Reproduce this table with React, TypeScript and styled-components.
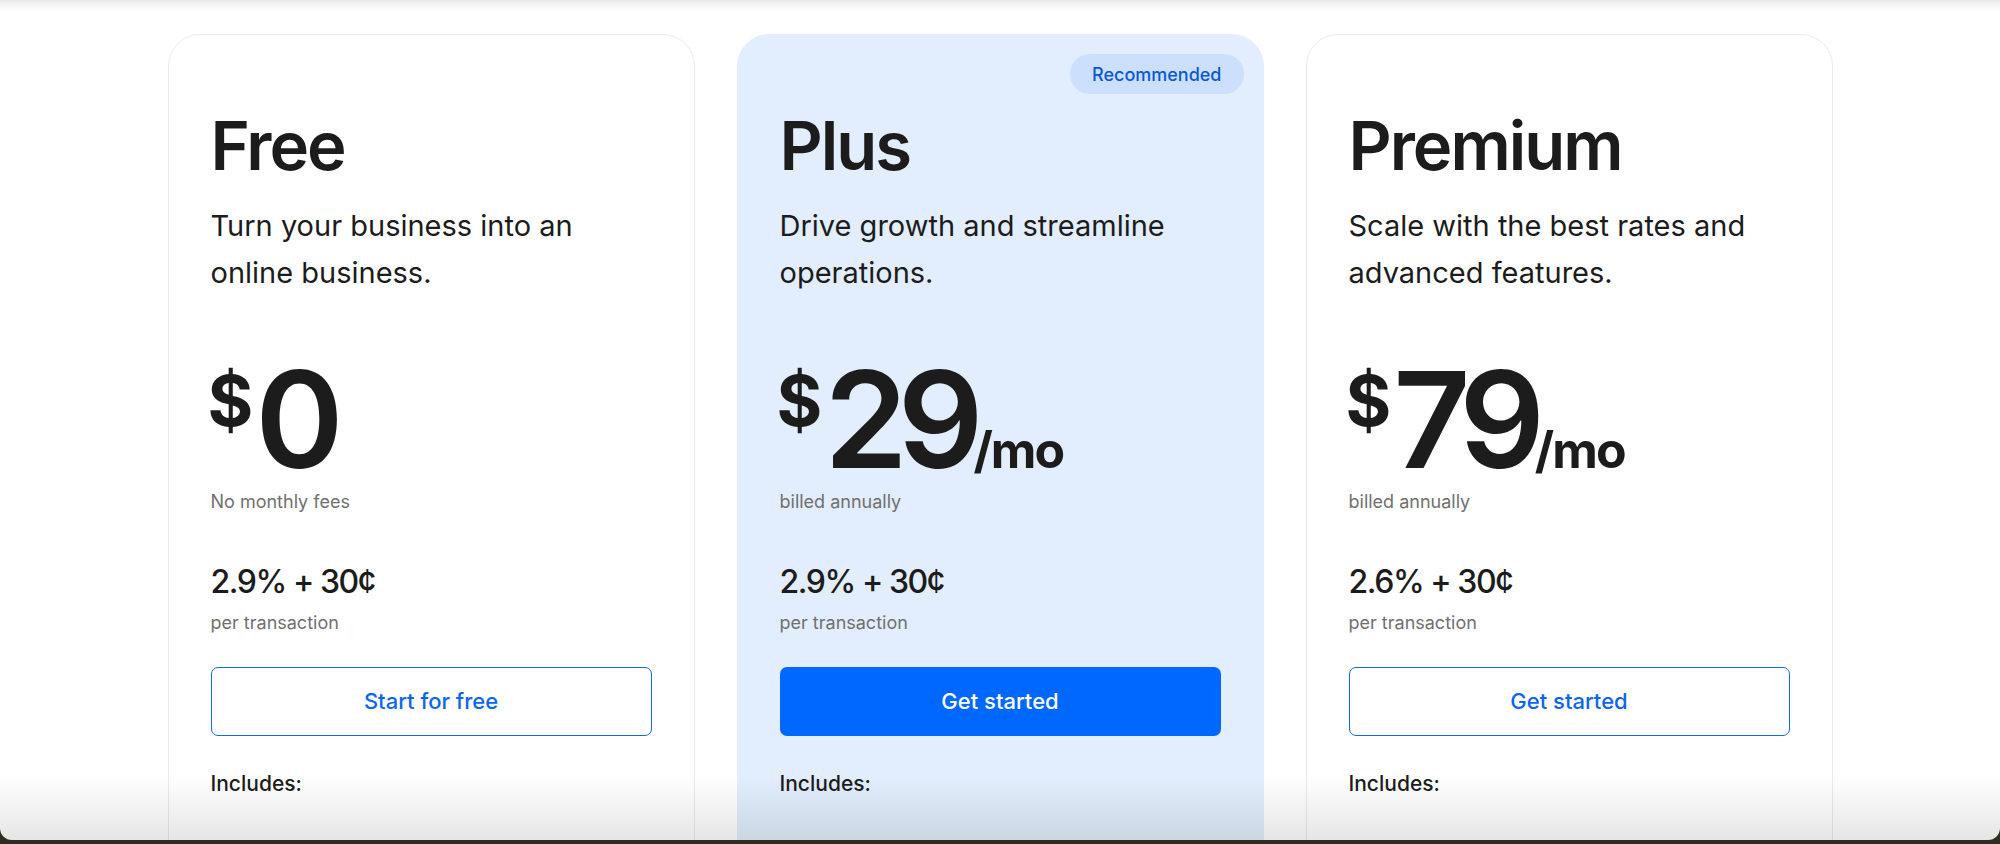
import React from "react";
import styled, { createGlobalStyle } from "styled-components";

const Global = createGlobalStyle`
  html, body { margin: 0; padding: 0; }
  body {
    background: #2f2d20;
    font-family: Inter, "Noto Sans", "Liberation Sans", sans-serif;
    color: #1c1c1c;
    -webkit-font-smoothing: antialiased;
  }
  * { box-sizing: border-box; }
`;

const Window = styled.div`
  position: relative;
  height: 840px;
  background: #ffffff;
  border-radius: 0 0 12px 12px;
  overflow: hidden;
`;

const TopShade = styled.div`
  height: 12px;
  background: linear-gradient(to bottom, #e9e9e9 0%, #f6f6f6 45%, #ffffff 100%);
`;

const BottomShade = styled.div`
  position: absolute;
  left: 0;
  right: 0;
  bottom: 0;
  height: 64px;
  background: linear-gradient(to bottom, rgba(0, 0, 0, 0) 0%, rgba(0, 0, 0, 0.1) 100%);
  pointer-events: none;
`;

const Plans = styled.div`
  display: grid;
  grid-template-columns: repeat(3, 527px);
  justify-content: center;
  gap: 42px;
  padding-top: 22px;
`;

const Card = styled.div<{ $featured?: boolean }>`
  position: relative;
  display: flex;
  flex-direction: column;
  align-items: flex-start;
  min-height: 1100px;
  padding: 71px 42px 40px;
  border-radius: 32px;
  background: ${(p) => (p.$featured ? "#e2eefd" : "#ffffff")};
  border: 1px solid ${(p) => (p.$featured ? "#e2eefd" : "#ebebeb")};
`;

const Badge = styled.span`
  position: absolute;
  top: 19px;
  right: 19px;
  height: 40px;
  padding: 0 22px;
  display: inline-flex;
  align-items: center;
  border-radius: 20px;
  background: #cce0fd;
  color: #0a58d6;
  font-size: 18px;
  font-weight: 500;
`;

const Title = styled.h2`
  margin: 0;
  font-size: 67px;
  line-height: 1.2;
  font-weight: 600;
  letter-spacing: -0.03em;
  color: #1c1c1c;
`;

const Description = styled.p`
  margin: 17px 0 0;
  font-size: 29px;
  line-height: 46.4px;
  font-weight: 400;
  letter-spacing: 0;
  color: #1c1c1c;
  max-width: 430px;
`;

const Price = styled.div`
  margin-top: 56px;
  height: 134px;
  font-size: 134px;
  line-height: 1;
  font-weight: 600;
  white-space: nowrap;
  color: #1c1c1c;
`;

const Currency = styled.span`
  display: inline-block;
  vertical-align: top;
  margin-top: 14px;
  margin-left: -3px;
  margin-right: 2px;
  font-size: 70px;
  line-height: 1;
  font-weight: 700;
`;

const Amount = styled.span`
  letter-spacing: -0.075em;
`;

const Period = styled.span`
  font-size: 50px;
  font-weight: 700;
  letter-spacing: -0.04em;
`;

const Muted = styled.div<{ $gap?: number }>`
  margin-top: ${(p) => p.$gap ?? 0}px;
  font-size: 18px;
  line-height: 27px;
  color: #707070;
`;

const Fee = styled.div`
  margin-top: 46px;
  font-size: 32px;
  line-height: 41.6px;
  font-weight: 500;
  letter-spacing: -0.045em;
  color: #1c1c1c;
`;

const Button = styled.button<{ $primary?: boolean }>`
  margin-top: 31px;
  width: 100%;
  height: 69px;
  border-radius: 7px;
  font-family: inherit;
  font-size: 22px;
  font-weight: 500;
  cursor: pointer;
  background: ${(p) => (p.$primary ? "#0068ff" : "#ffffff")};
  color: ${(p) => (p.$primary ? "#ffffff" : "#0a66f0")};
  border: ${(p) => (p.$primary ? "none" : "1.5px solid #0f69f3")};
`;

const Includes = styled.div`
  margin-top: 32px;
  font-size: 21px;
  line-height: 31.5px;
  font-weight: 500;
  color: #1c1c1c;
`;

const Features = styled.ul`
  list-style: none;
  margin: 36px 0 0;
  padding: 0;
  display: flex;
  flex-direction: column;
  gap: 16px;
`;

const Feature = styled.li`
  display: flex;
  align-items: center;
  gap: 12px;
  font-size: 19px;
  line-height: 28px;
  color: #1c1c1c;
`;

const Check = () => (
  <svg width="18" height="18" viewBox="0 0 18 18" fill="none">
    <path d="M3 9.5l4 4 8-9" stroke="#0068ff" strokeWidth="2" strokeLinecap="round" strokeLinejoin="round" />
  </svg>
);

type Plan = {
  name: string;
  desc: string;
  amount: string;
  period?: string;
  note: string;
  fee: string;
  cta: string;
  featured?: boolean;
  features: string[];
};

const plans: Plan[] = [
  {
    name: "Free",
    desc: "Turn your business into an online business.",
    amount: "0",
    note: "No monthly fees",
    fee: "2.9% + 30¢",
    cta: "Start for free",
    features: ["Online store", "Unlimited products", "Payments"],
  },
  {
    name: "Plus",
    desc: "Drive growth and streamline operations.",
    amount: "29",
    period: "/mo",
    note: "billed annually",
    fee: "2.9% + 30¢",
    cta: "Get started",
    featured: true,
    features: ["Everything in Free, plus:", "Advanced reports", "Shipping discounts"],
  },
  {
    name: "Premium",
    desc: "Scale with the best rates and advanced features.",
    amount: "79",
    period: "/mo",
    note: "billed annually",
    fee: "2.6% + 30¢",
    cta: "Get started",
    features: ["Everything in Plus, plus:", "Lowest rates", "Priority support"],
  },
];

export default function App() {
  return (
    <>
      <Global />
      <Window>
        <TopShade />
        <Plans>
          {plans.map((p) => (
            <Card key={p.name} $featured={p.featured}>
              {p.featured && <Badge>Recommended</Badge>}
              <Title>{p.name}</Title>
              <Description>{p.desc}</Description>
              <Price>
                <Currency>$</Currency>
                <Amount>{p.amount}</Amount>
                {p.period && <Period>{p.period}</Period>}
              </Price>
              <Muted $gap={2}>{p.note}</Muted>
              <Fee>{p.fee}</Fee>
              <Muted $gap={6}>per transaction</Muted>
              <Button $primary={p.featured}>{p.cta}</Button>
              <Includes>Includes:</Includes>
              <Features>
                {p.features.map((f) => (
                  <Feature key={f}>
                    <Check />
                    {f}
                  </Feature>
                ))}
              </Features>
            </Card>
          ))}
        </Plans>
        <BottomShade />
      </Window>
    </>
  );
}
